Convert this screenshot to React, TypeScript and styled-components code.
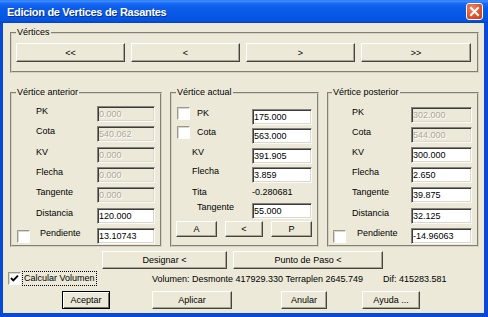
import React from "react";
import styled, { createGlobalStyle, css } from "styled-components";

const Global = createGlobalStyle`
  html, body { margin: 0; padding: 0; background: #ffffff; }
  body { font-family: "Liberation Sans", Arial, sans-serif; font-size: 9px; color: #000; }
  *, *::before, *::after { box-sizing: border-box; }
`;

const Window = styled.div`
  width: 488px;
  height: 317px;
  display: flex;
  flex-direction: column;
  background: #0a48d8;
  overflow: hidden;
`;

const TitleBar = styled.div`
  height: 23px;
  flex: none;
  display: flex;
  align-items: center;
  justify-content: space-between;
  padding: 0 5px 0 7px;
  background: linear-gradient(
    180deg,
    #2f7dfa 0%,
    #3d8cff 6%,
    #1a6cf7 14%,
    #0a5ce9 35%,
    #0757e4 70%,
    #0654e0 88%,
    #0442c4 100%
  );
`;

const Title = styled.span`
  color: #fff;
  font-weight: bold;
  font-size: 11px;
  letter-spacing: -0.3px;
  text-shadow: 1px 1px #0b2f8c;
  white-space: nowrap;
`;

const CloseButton = styled.div`
  width: 17px;
  height: 17px;
  border: 1px solid #fff;
  border-radius: 3px;
  background: radial-gradient(circle at 35% 30%, #f08a68 0%, #e25a34 45%, #c83c18 100%);
  display: flex;
  align-items: center;
  justify-content: center;
`;

const Client = styled.div`
  flex: 1;
  margin: 0 4px 4px 3px;
  background: #ece9d8;
  display: flex;
  flex-direction: column;
`;

const GroupBox = styled.fieldset<{ $w: number; $h?: number; $pt: number; $pr: number; $pl?: number; $pb?: number }>`
  margin: 0;
  min-width: 0;
  width: ${(p) => p.$w}px;
  ${(p) => (p.$h ? `height: ${p.$h}px;` : "")}
  border: 2px groove #d6d2c2;
  padding: ${(p) => p.$pt}px ${(p) => p.$pr}px ${(p) => p.$pb ?? 0}px ${(p) => p.$pl ?? 0}px;
  flex: none;
`;

const Legend = styled.legend<{ $ml: number }>`
  margin-left: ${(p) => p.$ml}px;
  padding: 0 1px;
  font-size: 9px;
  line-height: 11px;
  height: 11px;
  white-space: nowrap;
`;

const TopGroupWrap = styled.div`
  margin: 4px 0 0 7px;
`;

const NavGrid = styled.div`
  display: grid;
  grid-template-columns: 109px 109px 109px 110px;
  column-gap: 6px;
`;

const Btn = styled.button<{ $w?: number; $h: number; $ml?: number; $default?: boolean }>`
  ${(p) => (p.$w ? `width: ${p.$w}px;` : "")}
  height: ${(p) => p.$h}px;
  margin: 0 0 0 ${(p) => p.$ml ?? 0}px;
  padding: 0;
  flex: none;
  font-family: "Liberation Sans", Arial, sans-serif;
  font-size: 9px;
  color: #000;
  background: #ece9d8;
  border: 1px solid;
  border-color: #ffffff #45443d #45443d #ffffff;
  box-shadow: inset -1px -1px #a9a596;
  white-space: nowrap;
  ${(p) =>
    p.$default &&
    css`
      border-color: #000;
      box-shadow: inset 1px 1px #fff, inset -1px -1px #716f64;
    `}
`;

const GroupRow = styled.div`
  display: flex;
  gap: 8px;
  margin: 14px 0 0 7px;
`;

const Stack = styled.div<{ $gap: number }>`
  display: flex;
  flex-direction: column;
  gap: ${(p) => p.$gap}px;
`;

const Row = styled.div<{ $h?: number; $mt?: number }>`
  display: flex;
  align-items: flex-start;
  height: ${(p) => p.$h ?? 16}px;
  margin-top: ${(p) => p.$mt ?? 0}px;
`;

const Lead = styled.div<{ $w: number; $top: number }>`
  width: ${(p) => p.$w}px;
  height: 13px;
  flex: none;
  display: flex;
  align-items: center;
  margin-top: ${(p) => p.$top}px;
`;

const Label = styled.span<{ $top: number }>`
  white-space: nowrap;
  line-height: 11px;
  margin-top: ${(p) => p.$top}px;
`;

const Field = styled.div<{ $w: number; $disabled?: boolean }>`
  width: ${(p) => p.$w}px;
  height: 16px;
  flex: none;
  margin-left: auto;
  background: ${(p) => (p.$disabled ? "#ece9d8" : "#fff")};
  color: ${(p) => (p.$disabled ? "#aca899" : "#000")};
  ${(p) => (p.$disabled ? "text-shadow: 1px 1px #fff;" : "")}
  border: 1px solid;
  border-color: #85837a #fbfaf6 #fbfaf6 #85837a;
  box-shadow: inset 1px 1px #3b3b3b, inset -1px -1px #dcd9cc;
  padding: 0 0 0 1px;
  font-size: 9px;
  line-height: 14px;
  white-space: nowrap;
  overflow: hidden;
`;

const StaticValue = styled.span<{ $w: number; $top: number }>`
  width: ${(p) => p.$w}px;
  flex: none;
  margin-left: auto;
  line-height: 11px;
  margin-top: ${(p) => p.$top}px;
  white-space: nowrap;
`;

const Box = styled.span<{ $ml?: number }>`
  width: 13px;
  height: 13px;
  flex: none;
  margin-left: ${(p) => p.$ml ?? 0}px;
  background: #ffffff;
  border: 1px solid;
  border-color: #9c998c #ffffff #ffffff #9c998c;
  box-shadow: inset 1px 1px #d9d6ca;
  display: flex;
  align-items: center;
  justify-content: center;
`;

const Trio = styled.div`
  display: grid;
  grid-template-columns: 41px 38px 41px;
  justify-content: space-between;
  margin: 2px 0 0 4px;
`;

const ActionRow = styled.div`
  display: flex;
  margin-top: 4px;
`;

const VolumeRow = styled.div`
  display: grid;
  grid-template-columns: 149px 231px 1fr;
  align-items: center;
  height: 15px;
  margin-top: 2px;
`;

const CheckCell = styled.div`
  display: flex;
  align-items: center;
`;

const FocusLabel = styled.span`
  margin-left: 1px;
  padding: 0 1px;
  border: 1px dotted #000;
  line-height: 13px;
  white-space: nowrap;
`;

const Info = styled.span`
  white-space: nowrap;
`;

const ButtonRow = styled.div`
  display: flex;
  margin-top: 5px;
`;

type RowSpec = {
  label: string;
  value: string;
  disabled?: boolean;
  check?: boolean;
  indent: number;
  checkAt?: number;
  plain?: boolean;
  h?: number;
  mt?: number;
};

type Offsets = { labelTop: number; checkTop: number };

function CheckBox({ ml, checked }: { ml?: number; checked?: boolean }) {
  return (
    <Box $ml={ml}>
      {checked && (
        <svg width="9" height="9" viewBox="0 0 9 9">
          <path d="M1 4 L3.3 6.3 L8 1.6" stroke="#000" strokeWidth="1.9" fill="none" />
        </svg>
      )}
    </Box>
  );
}

function DataRow({ spec, fieldW, off }: { spec: RowSpec; fieldW: number; off: Offsets }) {
  const labelTop = spec.plain ? 1 : off.labelTop;
  return (
    <Row $h={spec.h} $mt={spec.mt}>
      <Lead $w={spec.indent} $top={off.checkTop}>
        {spec.check && <CheckBox ml={spec.checkAt} />}
      </Lead>
      <Label $top={labelTop}>{spec.label}</Label>
      {spec.plain ? (
        <StaticValue $w={fieldW} $top={labelTop}>
          {spec.value}
        </StaticValue>
      ) : (
        <Field $w={fieldW} $disabled={spec.disabled}>
          {spec.value}
        </Field>
      )}
    </Row>
  );
}

const anterior: RowSpec[] = [
  { label: "PK", value: "0.000", disabled: true, indent: 24 },
  { label: "Cota", value: "540.062", disabled: true, indent: 24 },
  { label: "KV", value: "0.000", disabled: true, indent: 24, mt: 1 },
  { label: "Flecha", value: "0.000", disabled: true, indent: 24 },
  { label: "Tangente", value: "0.000", disabled: true, indent: 24 },
  { label: "Distancia", value: "120.000", indent: 24, mt: 1 },
  { label: "Pendiente", value: "13.10743", check: true, checkAt: 5, indent: 28 },
];

const actual: RowSpec[] = [
  { label: "PK", value: "175.000", check: true, checkAt: 5, indent: 25 },
  { label: "Cota", value: "563.000", check: true, checkAt: 5, indent: 25 },
  { label: "KV", value: "391.905", indent: 20, mt: 1 },
  { label: "Flecha", value: "3.859", indent: 20 },
  { label: "Tita", value: "-0.280681", indent: 20, plain: true, h: 13 },
  { label: "Tangente", value: "55.000", indent: 25, mt: 1 },
];

const posterior: RowSpec[] = [
  { label: "PK", value: "302.000", disabled: true, indent: 23 },
  { label: "Cota", value: "544.000", disabled: true, indent: 23 },
  { label: "KV", value: "300.000", indent: 23 },
  { label: "Flecha", value: "2.650", indent: 23 },
  { label: "Tangente", value: "39.875", indent: 23 },
  { label: "Distancia", value: "32.125", indent: 23, mt: 1 },
  { label: "Pendiente", value: "-14.96063", check: true, checkAt: 4, indent: 28 },
];

const sideOff: Offsets = { labelTop: 0, checkTop: 2 };
const midOff: Offsets = { labelTop: -1, checkTop: -2 };

export default function App() {
  return (
    <>
      <Global />
      <Window>
        <TitleBar>
          <Title>Edicion de Vertices de Rasantes</Title>
          <CloseButton>
            <svg width="11" height="11" viewBox="0 0 11 11">
              <path d="M2 2 L9 9 M9 2 L2 9" stroke="#fff" strokeWidth="2" strokeLinecap="square" />
            </svg>
          </CloseButton>
        </TitleBar>
        <Client>
          <TopGroupWrap>
            <GroupBox $w={469} $pt={5} $pr={4} $pl={4} $pb={9}>
              <Legend $ml={0}>Vértices</Legend>
              <NavGrid>
                <Btn $h={19}>&lt;&lt;</Btn>
                <Btn $h={19}>&lt;</Btn>
                <Btn $h={19}>&gt;</Btn>
                <Btn $h={19}>&gt;&gt;</Btn>
              </NavGrid>
            </GroupBox>
          </TopGroupWrap>

          <GroupRow>
            <GroupBox $w={152} $h={160} $pt={8} $pr={5}>
              <Legend $ml={4}>Vértice anterior</Legend>
              <Stack $gap={4}>
                {anterior.map((r) => (
                  <DataRow key={r.label} spec={r} fieldW={58} off={sideOff} />
                ))}
              </Stack>
            </GroupBox>
            <GroupBox $w={149} $h={160} $pt={11} $pr={5}>
              <Legend $ml={4}>Vértice actual</Legend>
              <Stack $gap={3}>
                {actual.map((r) => (
                  <DataRow key={r.label} spec={r} fieldW={60} off={midOff} />
                ))}
              </Stack>
              <Trio>
                <Btn $h={16}>A</Btn>
                <Btn $h={16}>&lt;</Btn>
                <Btn $h={16}>P</Btn>
              </Trio>
            </GroupBox>
            <GroupBox $w={152} $h={160} $pt={9} $pr={5}>
              <Legend $ml={3}>Vértice posterior</Legend>
              <Stack $gap={4}>
                {posterior.map((r) => (
                  <DataRow key={r.label} spec={r} fieldW={61} off={sideOff} />
                ))}
              </Stack>
            </GroupBox>
          </GroupRow>

          <ActionRow>
            <Btn $w={125} $h={18} $ml={99}>
              Designar &lt;
            </Btn>
            <Btn $w={150} $h={18} $ml={6}>
              Punto de Paso &lt;
            </Btn>
          </ActionRow>

          <VolumeRow>
            <CheckCell>
              <CheckBox ml={5} checked />
              <FocusLabel>Calcular Volumen</FocusLabel>
            </CheckCell>
            <Info>Volumen: Desmonte 417929.330 Terraplen 2645.749</Info>
            <Info>Dif: 415283.581</Info>
          </VolumeRow>

          <ButtonRow>
            <Btn $w={48} $h={18} $ml={59} $default>
              Aceptar
            </Btn>
            <Btn $w={80} $h={18} $ml={42}>
              Aplicar
            </Btn>
            <Btn $w={46} $h={18} $ml={49}>
              Anular
            </Btn>
            <Btn $w={58} $h={18} $ml={35}>
              Ayuda ...
            </Btn>
          </ButtonRow>
        </Client>
      </Window>
    </>
  );
}
